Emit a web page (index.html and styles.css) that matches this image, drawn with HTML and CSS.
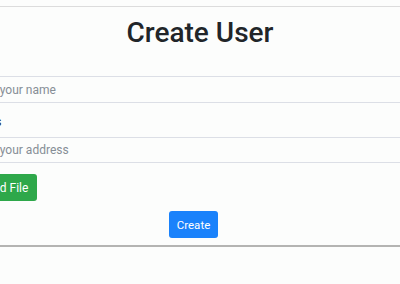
FILE: index.html
```html
<!DOCTYPE html>
<html lang="en">
<head>
    <meta charset="UTF-8">
    <meta name="viewport" content="width=device-width, initial-scale=1.0">
    <title>Create User</title>
    <link rel="stylesheet" href="styles.css">
</head>
<body>

    <div class="card">
        <h1>Create User</h1>

        <form class="user-form">
            <div class="fields">
                <input type="text" class="field field-name" placeholder="Enter your name">
                <input type="text" class="field field-group" value="Groups">
                <input type="text" class="field field-address" placeholder="Enter your address">
            </div>

            <button type="button" class="btn btn-upload">Upload File</button>

            <div class="actions">
                <button type="submit" class="btn btn-create">Create</button>
            </div>
        </form>
    </div>

</body>
</html>
```

FILE: styles.css
```css
* {
    box-sizing: border-box;
}

body {
    font-family: 'Roboto', 'Noto Sans', sans-serif;
    margin: 0;
    padding: 6px 0 0 0;
    background-color: #fcfdfc;
    color: #212529;
    overflow: hidden;
}

.card {
    margin: 0 -40px;
    border-top: 1px solid #dcdcdc;
    border-bottom: 2px solid #b4b4b2;
    padding: 8px 0 7px;
}

h1 {
    margin: 0;
    text-align: center;
    font-size: 28px;
    line-height: 36px;
    font-weight: 500;
    color: #212529;
}

.user-form {
    margin-top: 25px;
}

.fields {
    display: flex;
    flex-direction: column;
}

.field {
    font-family: inherit;
    font-size: 12px;
    color: #212529;
    background-color: #fcfdfc;
    border: none;
    border-top: 1px solid #dcdfe6;
    padding: 0 9px;
    outline: none;
}

.field-name {
    height: 26px;
}

.field-group {
    height: 35px;
    padding: 4px 9px 0 3px;
}

.field-address {
    height: 26px;
    border-bottom: 1px solid #dcdfe6;
}

.field::placeholder {
    color: #868e96;
}

.btn {
    font-family: inherit;
    font-size: 12px;
    color: #fff;
    border: none;
    border-radius: 3px;
    height: 27px;
    cursor: pointer;
}

.btn-upload {
    background-color: #2ea84a;
    margin-top: 11px;
    padding: 0 9px;
}

.actions {
    display: flex;
    justify-content: center;
    padding-right: 13px;
    margin-top: 10px;
}

.btn-create {
    background-color: #1a82fb;
    font-size: 11.5px;
    padding: 0 8px;
}
```
